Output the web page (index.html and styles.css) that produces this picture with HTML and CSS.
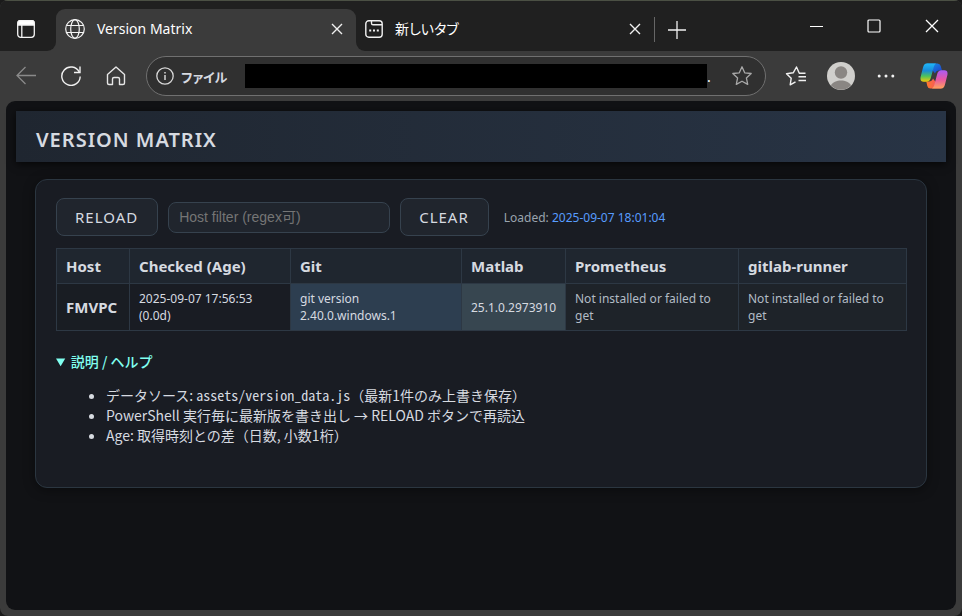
FILE: index.html
```html
<!DOCTYPE html>
<html lang="ja">
<head>
<meta charset="utf-8">
<meta name="viewport" content="width=device-width, initial-scale=1">
<title>Version Matrix</title>
<link rel="stylesheet" href="styles.css">
</head>
<body>
<div class="window">
  <div class="tabstrip">
    <div class="strip-start">
      <button class="icon-btn" type="button" aria-label="タブ操作メニュー">
        <svg width="18" height="18" viewBox="0 0 18 18" fill="none" stroke="#f4f4f4" stroke-width="1.3"><rect x=".7" y=".7" width="16.6" height="16.6" rx="3"/><path d="M1 1.8Q1.5.7 3 .7h12q1.500 0 2 1.100V5H1z" fill="#fff"/><path d="M4.800 5v12"/></svg>
      </button>
    </div>
    <div class="tab-slot">
      <div class="tab tab-active">
        <svg width="20" height="20" viewBox="0 0 20 20" fill="none" stroke="#f4f4f4" stroke-width="1.2"><circle cx="10" cy="10" r="9.300"/><ellipse cx="10" cy="10" rx="4.300" ry="9.300"/><path d="M1.600 6.500h16.800M1.600 13.500h16.800"/></svg>
        <span class="tab-title">Version Matrix</span>
        <button class="tab-close" type="button" aria-label="タブを閉じる"><svg width="12" height="12" viewBox="0 0 12 12" stroke="#f0f0f0" stroke-width="1.4"><path d="M1 1l10 10M11 1L1 11"/></svg></button>
      </div>
    </div>
    <div class="strip-rest">
      <div class="tab">
        <svg width="18" height="18" viewBox="0 0 18 18" fill="none" stroke="#f0f0f0" stroke-width="1.4"><rect x=".8" y=".8" width="16.400" height="16.400" rx="3"/><path d="M6.500 1v2.200q0 1.600 1.600 1.600H17"/><path d="M4.200 10.500h2M8 10.500h2M11.800 10.500h2" stroke-width="2"/></svg>
        <span class="tab-title">新しいタブ</span>
        <button class="tab-close" type="button" aria-label="タブを閉じる"><svg width="12" height="12" viewBox="0 0 12 12" stroke="#f0f0f0" stroke-width="1.4"><path d="M1 1l10 10M11 1L1 11"/></svg></button>
      </div>
      <button class="new-tab" type="button" aria-label="新しいタブを開く"><svg width="18" height="18" viewBox="0 0 18 18" stroke="#f0f0f0" stroke-width="1.300"><path d="M9 0v18M0 9h18"/></svg></button>
      <div class="window-controls">
        <button type="button" aria-label="最小化"><svg width="14" height="14" viewBox="0 0 14 14" stroke="#fff"><path d="M1 7.500h13"/></svg></button>
        <button type="button" aria-label="最大化"><svg width="14" height="14" viewBox="0 0 14 14" fill="none" stroke="#fff" stroke-width="1.200"><rect x="1" y="1" width="12" height="12" rx="1"/></svg></button>
        <button type="button" aria-label="閉じる"><svg width="14" height="14" viewBox="0 0 14 14" stroke="#fff" stroke-width="1.300"><path d="M1 1l12 12M13 1L1 13"/></svg></button>
      </div>
    </div>
  </div>

  <div class="toolbar">
    <button class="tool" type="button" aria-label="戻る"><svg width="20" height="20" viewBox="0 0 20 20" fill="none" stroke="#8a8a8a" stroke-width="1.300"><path d="M20 9.500H1M9.500 1L1 9.500 9.500 18"/></svg></button>
    <button class="tool" type="button" aria-label="更新"><svg width="20" height="20" viewBox="0 0 20 20" fill="none" stroke="#f0f0f0" stroke-width="1.400"><path d="M18.200 6A9.200 9.200 0 1 0 19.200 10.500"/><path d="M19 .5v6h-6"/></svg></button>
    <button class="tool" type="button" aria-label="ホーム"><svg width="20" height="20" viewBox="0 0 20 20" fill="none" stroke="#e6e6e6" stroke-width="1.400" stroke-linejoin="round"><path d="M10 1L1.500 8.500V17q0 1.500 1.500 1.500h3.500V13q0-1.500 1.500-1.500h4q1.500 0 1.500 1.500v5.500H17q1.500 0 1.500-1.500V8.500z"/></svg></button>
    <div class="address">
      <svg width="18" height="18" viewBox="0 0 18 18" fill="none" stroke="#d6d6d6" stroke-width="1.300"><circle cx="9" cy="9" r="8.200"/><path d="M9 8v5M9 5v1.500" stroke-width="1.500"/></svg>
      <label class="scheme" for="url">ファイル</label>
      <input class="url" id="url" type="text">
      <span class="url-end">.</span>
      <button class="favorite" type="button" aria-label="お気に入りに追加"><svg width="22" height="22" viewBox="0 0 22 22" fill="none" stroke="#a8a8a8" stroke-width="1.300" stroke-linejoin="round"><path d="M11 1.800l2.700 6 6.500.7-4.800 4.400 1.300 6.500L11 16.200l-5.700 3.200 1.300-6.500L1.800 8.500l6.500-.7z"/></svg></button>
    </div>
    <button class="tool" type="button" aria-label="お気に入り"><svg width="22" height="22" viewBox="0 0 22 22" fill="none" stroke="#f0f0f0" stroke-width="1.400" stroke-linejoin="round"><path d="M20.500 8.300h-6.200L11.500 2 8.200 7.800l-6.700.9 4.700 4.500-1 6.600 5.300-3"/><path d="M13.500 11.800H21M13.500 15.500H21"/></svg></button>
    <button class="tool" type="button" aria-label="プロファイル"><svg width="28" height="28" viewBox="0 0 28 28"><circle cx="14" cy="14" r="14" fill="#d0cfcc"/><circle cx="14" cy="10.500" r="6.200" fill="#8a8683"/><path d="M4 23.500C7 16.800 21 16.800 24 23.500A14 14 0 0 1 4 23.500z" fill="#8a8683"/></svg></button>
    <button class="tool" type="button" aria-label="設定など"><svg width="18" height="4" viewBox="0 0 18 4" fill="#f2f2f2"><circle cx="2.200" cy="2" r="1.500"/><circle cx="9" cy="2" r="1.500"/><circle cx="15.800" cy="2" r="1.500"/></svg></button>
    <button class="tool copilot" type="button" aria-label="Copilot">
      <svg width="28" height="26" viewBox="0 0 28 26">
        <defs>
          <linearGradient id="cool" x1="0" y1="0" x2="0" y2="1"><stop offset="0" stop-color="#20b8f8"/><stop offset=".4" stop-color="#188ad8"/><stop offset=".7" stop-color="#4fc35a"/><stop offset="1" stop-color="#f2c80a"/></linearGradient>
          <linearGradient id="warm" x1="0" y1="0" x2="0" y2="1"><stop offset="0" stop-color="#a95cf5"/><stop offset=".5" stop-color="#e857a5"/><stop offset="1" stop-color="#ffa35c"/></linearGradient>
          <linearGradient id="blue" x1="0" y1="0" x2="1" y2="1"><stop offset="0" stop-color="#159be8"/><stop offset="1" stop-color="#2038c8"/></linearGradient>
          <linearGradient id="red" x1="0" y1="0" x2="1" y2="0"><stop offset="0" stop-color="#ff7a2b"/><stop offset="1" stop-color="#f04872"/></linearGradient>
        </defs>
        <path d="M6.500.5H17.500q2.500 0 3.200 2.600L22 7.500h-3q-3 0-4 3l-3-4z" fill="url(#blue)"/>
        <path d="M21.500 25.500H10.500q-2.500 0-3.200-2.600L6.300 18.500H9q3 0 4-3l3 4z" fill="url(#red)"/>
        <path d="M6.500.5H16q-1.600.8-2.200 3.200L10.800 15Q9.800 18.700 6.500 18.700H3.700Q-.2 18.700.6 14L3 4.500Q4 .5 6.500.5z" fill="url(#cool)"/>
        <path d="M21.500 25.500H12q1.600-.8 2.200-3.200L17.200 11q1-3.700 4.300-3.700h2.800q3.900 0 3.100 4.700L25 21.500q-1 4-3.500 4z" fill="url(#warm)"/>
      </svg>
    </button>
  </div>

  <main class="viewport">
    <header class="page-header"><h1>VERSION MATRIX</h1></header>
    <section class="card">
      <div class="controls">
        <button class="btn" type="button">RELOAD</button>
        <input class="filter" type="text" placeholder="Host filter (regex可)" aria-label="Host filter">
        <button class="btn" type="button">CLEAR</button>
        <span class="loaded">Loaded: <time>2025-09-07 18:01:04</time></span>
      </div>
      <table class="matrix">
        <colgroup><col class="c-host"><col class="c-checked"><col class="c-git"><col class="c-matlab"><col class="c-prom"><col class="c-runner"></colgroup>
        <thead>
          <tr><th scope="col">Host</th><th scope="col">Checked (Age)</th><th scope="col">Git</th><th scope="col">Matlab</th><th scope="col">Prometheus</th><th scope="col">gitlab-runner</th></tr>
        </thead>
        <tbody>
          <tr><th scope="row">FMVPC</th><td>2025-09-07 17:56:53 (0.0d)</td><td class="v-git">git version 2.40.0.windows.1</td><td class="v-matlab">25.1.0.2973910</td><td class="missing">Not installed or failed to get</td><td class="missing">Not installed or failed to get</td></tr>
        </tbody>
      </table>
      <details class="help" open>
        <summary>説明 / ヘルプ</summary>
        <ul>
          <li>データソース: <code>assets/version_data.js</code>（最新1件のみ上書き保存）</li>
          <li>PowerShell 実行毎に最新版を書き出し → RELOAD ボタンで再読込</li>
          <li>Age: 取得時刻との差（日数, 小数1桁）</li>
        </ul>
      </details>
    </section>
  </main>
</div>
</body>
</html>
```
FILE: styles.css
```css
* { box-sizing: border-box; }

body {
  margin: 0;
  background: #1b1b1b;
  color: #d6dae0;
  font-family: "Noto Sans", "Noto Sans CJK JP", sans-serif;
  font-size: 12px;
}

button, input { font: inherit; color: inherit; }

button {
  display: flex;
  align-items: center;
  justify-content: center;
  padding: 0;
  border: 0;
  background: none;
}

svg { display: block; flex: none; }

.window {
  display: flex;
  flex-direction: column;
  min-height: 100vh;
  padding: 0 6px 6px;
  background: #3b3b3b;
  border-radius: 8px;
  overflow: hidden;
}

/* Tab strip */
.tabstrip {
  display: flex;
  height: 51px;
  margin: 0 -6px;
  border-top: 1px solid #4b5044;
}

.strip-start {
  flex: none;
  width: 56px;
  padding: 4px 0 0 4px;
  background: #202020;
  border-bottom-right-radius: 9px;
}

.icon-btn { width: 44px; height: 48px; }

.tab-slot {
  flex: 0 1 300px;
  padding-top: 8px;
  background: #202020;
}

.tab {
  display: flex;
  align-items: center;
  gap: 12px;
  height: 42px;
  padding: 0 13px 2px 9px;
}

.tab-active {
  background: #3b3b3b;
  border-radius: 9px 9px 0 0;
}

.tab-title {
  flex: 1;
  padding-bottom: 2px;
  color: #fff;
  font-size: 14px;
  font-feature-settings: "palt";
}

.tab-close { flex: none; width: 12px; height: 24px; }

.strip-rest {
  display: flex;
  flex: 1;
  background: #202020;
  border-bottom-left-radius: 9px;
}

.strip-rest .tab {
  flex: 0 1 298px;
  margin-top: 8px;
}

.new-tab {
  width: 45px;
  height: 25px;
  margin-top: 16px;
  border-left: 1px solid #666;
}

.window-controls {
  display: flex;
  height: 50px;
  margin: 0 1px 0 auto;
}

.window-controls button { width: 58px; }

/* Toolbar */
.toolbar {
  display: flex;
  align-items: center;
  height: 50px;
  margin: 0 -4px 0 -3px;
}

.tool { flex: none; width: 45px; height: 40px; }

.toolbar .copilot { width: 52px; }

.address {
  display: flex;
  flex: 1;
  align-items: center;
  height: 40px;
  margin: 0 7px 0 8px;
  padding: 0 12px 0 9px;
  background: #303030;
  border: 1px solid #707070;
  border-radius: 20px;
}

.scheme {
  flex: none;
  width: 71px;
  padding-left: 7px;
  font-size: 13px;
  font-weight: 700;
  font-feature-settings: "palt";
}

.url {
  flex: 1;
  min-width: 0;
  height: 24px;
  padding: 0;
  background: #000;
  border: 0;
}

.url-end { width: 24px; color: #fff; font-size: 14px; }

/* Page */
.viewport {
  flex: 1;
  padding: 10px;
  background: #111215;
  border-radius: 9px;
}

.page-header {
  padding: 13px 20px 7px;
  background: linear-gradient(90deg, #1f2630, #283445);
  box-shadow: 0 2px 8px rgba(0, 0, 0, .7);
}

h1 {
  margin: 0;
  color: #d6dae0;
  font-size: 20px;
  font-weight: 600;
  line-height: 31px;
  letter-spacing: 1px;
}

.card {
  margin: 17px 19px;
  padding: 18px 20px 42px;
  background: #191c23;
  border: 1px solid #2b3640;
  border-radius: 12px;
  box-shadow: 0 2px 12px rgba(0, 0, 0, .4);
}

.controls {
  display: flex;
  align-items: center;
  gap: 10px;
  margin-bottom: 12px;
}

.btn {
  height: 38px;
  padding: 0 19px 0 18px;
  background: #20252d;
  border: 1px solid #36424e;
  border-radius: 8px;
  font-size: 15px;
  letter-spacing: 1px;
}

.filter {
  width: 222px;
  height: 31px;
  padding: 0 10px;
  background: #20252d;
  border: 1px solid #36424e;
  border-radius: 8px;
  font-family: "Liberation Sans", "Noto Sans CJK JP", sans-serif;
  font-size: 14px;
}

.filter::placeholder { color: #757575; }

.loaded {
  margin-left: 5px;
  color: #9aa4ae;
}

.loaded time { color: #589dff; }

.matrix {
  width: 100%;
  table-layout: fixed;
  border-collapse: collapse;
}

/* Column proportions; the fixed layout shares any extra width between them */
.c-host { width: 73px; }
.c-checked { width: 161px; }
.c-git { width: 171px; }
.c-matlab { width: 104px; }
.c-prom { width: 173px; }
.c-runner { width: 168px; }

.matrix th, .matrix td {
  padding: 6px 8px 6px 9px;
  border: 1px solid #2d3844;
  text-align: left;
  line-height: 17px;
}

.matrix th { font-size: 15px; font-weight: 700; }
.matrix thead th { background: #1f262f; line-height: 22px; }
.matrix tbody th { background: #191d23; }
.matrix .v-git { background: #2d3e50; }
.matrix .v-matlab { background: #374650; }
.matrix .missing { background: #1e2329; color: #b2bcc5; }

.help {
  margin-top: 20px;
  font-family: "Noto Sans CJK JP", sans-serif;
  font-size: 14px;
  line-height: 20px;
}

.help summary {
  color: #80fff0;
  font-weight: 500;
}

.help ul {
  margin: 14px 0 0;
  padding-left: 50px;
}

.help code {
  font-family: "Noto Sans Mono CJK JP", "DejaVu Sans Mono", monospace;
  font-size: 14px;
}
```
